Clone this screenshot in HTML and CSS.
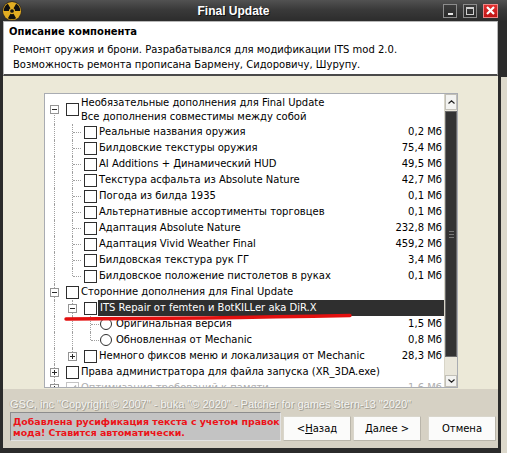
FILE: index.html
```html
<!DOCTYPE html>
<html lang="ru">
<head>
<meta charset="utf-8">
<title>Final Update</title>
<link rel="stylesheet" href="styles.css">
</head>
<body>
<div class="win">
  <div class="titlebar">
    <svg class="appicon" width="20" height="20" viewBox="2.3 0.3 19.4 19.4">
      <circle cx="12" cy="10" r="9.6" fill="#3a3020"/>
      <circle cx="12" cy="10" r="8.8" fill="#e2ad22"/>
      <path d="M13.5 7.4 L16 3.07 A8 8 0 0 1 20 10 L15 10 A3 3 0 0 0 13.5 7.4Z" fill="#111"/>
      <path d="M9 10 L4 10 A8 8 0 0 1 8 3.07 L10.5 7.4 A3 3 0 0 0 9 10Z" fill="#111"/>
      <path d="M13.5 12.6 L16 16.93 A8 8 0 0 1 8 16.93 L10.5 12.6 A3 3 0 0 0 13.5 12.6Z" fill="#111"/>
      <circle cx="12" cy="10" r="1.8" fill="#111"/>
    </svg>
    <div class="title">Final Update</div>
    <div class="tbtns">
      <span class="tb tb-min"><i></i></span>
      <span class="tb tb-max"><i></i></span>
      <span class="tb tb-close">
        <svg width="9" height="9" viewBox="0 0 9 9"><path d="M1 1L8 8M8 1L1 8" stroke="#fff" stroke-width="2.2"/></svg>
      </span>
    </div>
  </div>
  <div class="body">
    <div class="frame">
      <div class="header">
        <div class="h-title">Описание компонента</div>
        <div class="h-desc">Ремонт оружия и брони. Разрабатывался для модификации ITS mod 2.0.<br>Возможность ремонта прописана Бармену, Сидоровичу, Шурупу.</div>
      </div>
      <div class="middle">
        <div class="tree">
          <div class="list">
            <div class="row row-tall">
              <span class="c d"><span class="exp minus"></span></span>
              <span class="cb"></span>
              <span class="lbl">Необязательные дополнения для Final Update<br>Все дополнения совместимы между собой</span>
            </div>
            <div class="row"><span class="c v"></span><span class="c v h"></span><span class="cb"></span><span class="lbl">Реальные названия оружия</span><span class="sz">0,2 Мб</span></div>
            <div class="row"><span class="c v"></span><span class="c v h"></span><span class="cb"></span><span class="lbl">Билдовские текстуры оружия</span><span class="sz">75,4 Мб</span></div>
            <div class="row"><span class="c v"></span><span class="c v h"></span><span class="cb"></span><span class="lbl">AI Additions + Динамический HUD</span><span class="sz">49,5 Мб</span></div>
            <div class="row"><span class="c v"></span><span class="c v h"></span><span class="cb"></span><span class="lbl">Текстура асфальта из Absolute Nature</span><span class="sz">42,7 Мб</span></div>
            <div class="row"><span class="c v"></span><span class="c v h"></span><span class="cb"></span><span class="lbl">Погода из билда 1935</span><span class="sz">0,1 Мб</span></div>
            <div class="row"><span class="c v"></span><span class="c v h"></span><span class="cb"></span><span class="lbl">Альтернативные ассортименты торговцев</span><span class="sz">0,1 Мб</span></div>
            <div class="row"><span class="c v"></span><span class="c v h"></span><span class="cb"></span><span class="lbl">Адаптация Absolute Nature</span><span class="sz">232,8 Мб</span></div>
            <div class="row"><span class="c v"></span><span class="c v h"></span><span class="cb"></span><span class="lbl">Адаптация Vivid Weather Final</span><span class="sz">459,2 Мб</span></div>
            <div class="row"><span class="c v"></span><span class="c v h"></span><span class="cb"></span><span class="lbl">Билдовская текстура рук ГГ</span><span class="sz">3,4 Мб</span></div>
            <div class="row"><span class="c v"></span><span class="c t h"></span><span class="cb"></span><span class="lbl">Билдовское положение пистолетов в руках</span><span class="sz">0,1 Мб</span></div>
            <div class="row"><span class="c v"><span class="exp minus"></span></span><span class="cb"></span><span class="lbl">Сторонние дополнения для Final Update</span></div>
            <div class="row"><span class="c v"></span><span class="c v"><span class="exp minus"></span></span><span class="cb"></span><span class="lbl sel">ITS Repair от femten и BotKILLer aka DiR.X</span></div>
            <div class="row"><span class="c v"></span><span class="c v"></span><span class="c v h"></span><span class="rb"></span><span class="lbl">Оригинальная версия</span><span class="sz">1,5 Мб</span></div>
            <div class="row"><span class="c v"></span><span class="c v"></span><span class="c t h"></span><span class="rb"></span><span class="lbl">Обновленная от Mechanic</span><span class="sz">0,8 Мб</span></div>
            <div class="row"><span class="c v"></span><span class="c t"><span class="exp plus"></span></span><span class="cb"></span><span class="lbl">Немного фиксов меню и локализация от Mechanic</span><span class="sz">28,3 Мб</span></div>
            <div class="row"><span class="c v"><span class="exp plus"></span></span><span class="cb"></span><span class="lbl">Права администратора для файла запуска (XR_3DA.exe)</span></div>
            <div class="row dis"><span class="c t"><span class="exp plus"></span></span><span class="cb chk"><svg width="9" height="9" viewBox="0 0 9 9"><path d="M1 4.5L3.5 7L8 1.5" fill="none" stroke="#b5b5b5" stroke-width="1.6"/></svg></span><span class="lbl">Оптимизация требований к памяти</span><span class="sz">1,6 Мб</span></div>
          </div>
          <div class="sb">
            <div class="sb-btn sb-up"><svg width="7" height="4" viewBox="0 0 7 4"><path d="M0.5 3.5L3.5 0.8L6.5 3.5" fill="none" stroke="#222" stroke-width="1.2"/></svg></div>
            <div class="sb-thumb"><i></i><i></i><i></i></div>
            <div class="sb-track"></div>
            <div class="sb-btn sb-down"><svg width="7" height="4" viewBox="0 0 7 4"><path d="M0.5 0.5L3.5 3.2L6.5 0.5" fill="none" stroke="#222" stroke-width="1.2"/></svg></div>
          </div>
        </div>
      </div>
      <div class="footer">
        <div class="brand">GSC, inc "Copyright © 2007" - buka "© 2020" - Patcher for games Stern-13 "2020"</div>
        <div class="foot-row">
          <div class="note">Добавлена русификация текста с учетом правок<br>мода! Ставится автоматически.</div>
          <div class="btns">
            <span class="btn">&lt; <u>Н</u>азад</span>
            <span class="btn"><u>Д</u>алее &gt;</span>
            <span class="btn btn-cancel">Отмена</span>
          </div>
        </div>
      </div>
    </div>
    <div class="outside"></div>
  </div>
  <svg class="mark" width="507" height="453" viewBox="0 0 507 453">
    <path d="M66 319 Q200 318.5 350 315.5" fill="none" stroke="#e3100f" stroke-width="3.4" stroke-linecap="round"/>
  </svg>
</div>
</body>
</html>
```

FILE: styles.css
```css
html, body {
  margin: 0;
  padding: 0;
}
body {
  width: 507px;
  height: 453px;
  overflow: hidden;
  background: #2b2b2b;
  font-family: "DejaVu Sans", sans-serif;
  font-size: 10px;
  color: #000;
}
.win {
  position: relative;
  display: flex;
  flex-direction: column;
  width: 507px;
  height: 453px;
}
.titlebar {
  flex: none;
  height: 21px;
  display: flex;
  align-items: center;
  padding: 0 9px 0 2px;
  background: linear-gradient(#525252, #3a3a3a 45%, #2c2c2c);
}
.appicon {
  flex: none;
}
.title {
  flex: 1;
  text-align: center;
  color: #fff;
  font: bold 12px "Liberation Sans", Arial, sans-serif;
  text-shadow: 1px 1px 0 #111;
  padding-left: 2px;
}
.tbtns {
  display: flex;
  gap: 6px;
  align-items: center;
}
.tb {
  width: 14px;
  height: 14px;
  box-sizing: border-box;
  border: 1px solid #8c8c8c;
  background: linear-gradient(#3c3c3c, #2a2a2a);
  display: flex;
  align-items: center;
  justify-content: center;
}
.tb-min i {
  width: 5px;
  height: 2px;
  background: #e6e6e6;
  margin-top: 6px;
}
.tb-max i {
  width: 6px;
  height: 5px;
  border: 1px solid #cfcfcf;
  border-top-width: 2px;
}
.tb-close {
  width: 15px;
  border-color: #e88;
  background: linear-gradient(#e23030, #c01414);
}
.body {
  flex: 1;
  display: flex;
  min-height: 0;
}
.frame {
  width: 501px;
  box-sizing: border-box;
  border-left: 3px solid #2b2b2b;
  border-right: 3px solid #2b2b2b;
  border-bottom: 5px solid #2b2b2b;
  background: #ece9d8;
  display: flex;
  flex-direction: column;
}
.outside {
  flex: 1;
  background: linear-gradient(#2b2b2b 0, #2b2b2b 56px, #dcd8cb 56px);
}
.header {
  flex: none;
  height: 55px;
  box-sizing: border-box;
  background: #fff;
  border: 1px solid #b8b8b8;
  border-bottom: 2px solid #4a4a4a;
  padding: 3px 0 0 5px;
}
.h-title {
  font-weight: bold;
  line-height: 14px;
}
.h-desc {
  margin-top: 3px;
  padding-left: 4px;
  line-height: 15px;
}
.middle {
  flex: none;
  height: 313px;
  box-sizing: border-box;
  padding: 17px 0 0 41px;
}
.tree {
  width: 414px;
  height: 295px;
  box-sizing: border-box;
  border: 1px solid #a9acb2;
  background: #fff;
  display: flex;
  overflow: hidden;
}
.list {
  width: 399px;
  flex: none;
  padding-top: 1px;
  overflow: hidden;
}
.row {
  height: 16px;
  display: flex;
  align-items: center;
  line-height: 16px;
  white-space: nowrap;
}
.row-tall {
  height: 29px;
}
.row-tall .lbl {
  line-height: 14px;
}
.c {
  position: relative;
  flex: none;
  width: 18px;
  height: 100%;
  display: flex;
  align-items: center;
  justify-content: center;
}
.c.v::before,
.c.t::before,
.c.d::before {
  content: "";
  position: absolute;
  left: 9px;
  top: 0;
  bottom: 0;
  border-left: 1px dotted #a0a0a0;
}
.c.t::before {
  bottom: 50%;
}
.c.d::before {
  top: 50%;
}
.c.h::after {
  content: "";
  position: absolute;
  left: 10px;
  right: 0;
  top: 50%;
  border-top: 1px dotted #a0a0a0;
}
.exp {
  position: relative;
  z-index: 1;
  width: 9px;
  height: 9px;
  box-sizing: border-box;
  border: 1px solid #949494;
  background: #fff;
  margin-left: 1px;
}
.exp::before {
  content: "";
  position: absolute;
  left: 1px;
  top: 3px;
  width: 5px;
  height: 1px;
  background: #2a2a2a;
}
.exp.plus::after {
  content: "";
  position: absolute;
  left: 3px;
  top: 1px;
  width: 1px;
  height: 5px;
  background: #2a2a2a;
}
.cb {
  flex: none;
  width: 13px;
  height: 13px;
  box-sizing: border-box;
  border: 1px solid #2e2e2e;
  background: #fff;
  margin-left: 3px;
  display: flex;
  align-items: center;
  justify-content: center;
}
.rb {
  flex: none;
  width: 12px;
  height: 12px;
  box-sizing: border-box;
  border: 1px solid #2e2e2e;
  border-radius: 50%;
  background: #fff;
  margin-left: 1px;
}
.lbl {
  flex: 1;
  padding-left: 2px;
  overflow: hidden;
}
.rb + .lbl {
  padding-left: 4px;
}
.lbl.sel {
  background: #2f2f2f;
  color: #fff;
  padding-left: 2px;
  margin-left: 1px;
}
.sz {
  flex: none;
  width: 70px;
  text-align: right;
  padding-right: 2px;
}
.row.dis {
  color: #b0b0b0;
}
.row.dis .cb {
  border-color: #c4c4c4;
}
.sb {
  flex: 1;
  display: flex;
  flex-direction: column;
  background: #e9e6da;
  border-left: 1px solid #d8d5c8;
}
.sb-btn {
  flex: none;
  display: flex;
  align-items: center;
  justify-content: center;
  background: #f3f3f1;
  border: 1px solid #c2c0b8;
  box-sizing: border-box;
}
.sb-up {
  height: 16px;
}
.sb-down {
  height: 12px;
}
.sb-thumb {
  flex: none;
  height: 246px;
  margin-top: 1px;
  box-sizing: border-box;
  border: 1px solid #6a6a6a;
  background: #333;
  display: flex;
  flex-direction: column;
  align-items: center;
  justify-content: center;
  gap: 2px;
}
.sb-thumb i {
  width: 5px;
  height: 1px;
  background: #777;
}
.sb-track {
  flex: 1;
}
.footer {
  flex: 1;
  background: #d6d1c4;
  padding: 8px 0 0 7px;
}
.brand {
  font: 11px "Liberation Sans", Arial, sans-serif;
  color: #f4f4f2;
  text-shadow: 1px 1px 0 #a39f94, -1px 0 0 #bdb9ae;
  line-height: 14px;
  white-space: nowrap;
}
.foot-row {
  display: flex;
  align-items: flex-end;
  margin-top: 1px;
}
.note {
  width: 273px;
  height: 29px;
  box-sizing: border-box;
  background: #c3c3c3;
  border: 1px solid #8d8d8d;
  border-right-color: #e2e2e2;
  border-bottom-color: #e2e2e2;
  color: #ec1218;
  font-weight: bold;
  font-size: 9.4px;
  line-height: 11px;
  padding: 3px 0 0 2px;
  white-space: nowrap;
}
.btns {
  display: flex;
  margin-left: 2px;
}
.btn {
  width: 68px;
  height: 25px;
  box-sizing: border-box;
  background: #fbfbfa;
  border: 1px solid #d9d6cc;
  border-right-color: #b9b5aa;
  border-bottom-color: #b9b5aa;
  display: flex;
  align-items: center;
  justify-content: center;
  margin-right: 2px;
}
.btn-cancel {
  margin-left: 5px;
}
.mark {
  position: absolute;
  left: 0;
  top: 0;
  pointer-events: none;
}
```
